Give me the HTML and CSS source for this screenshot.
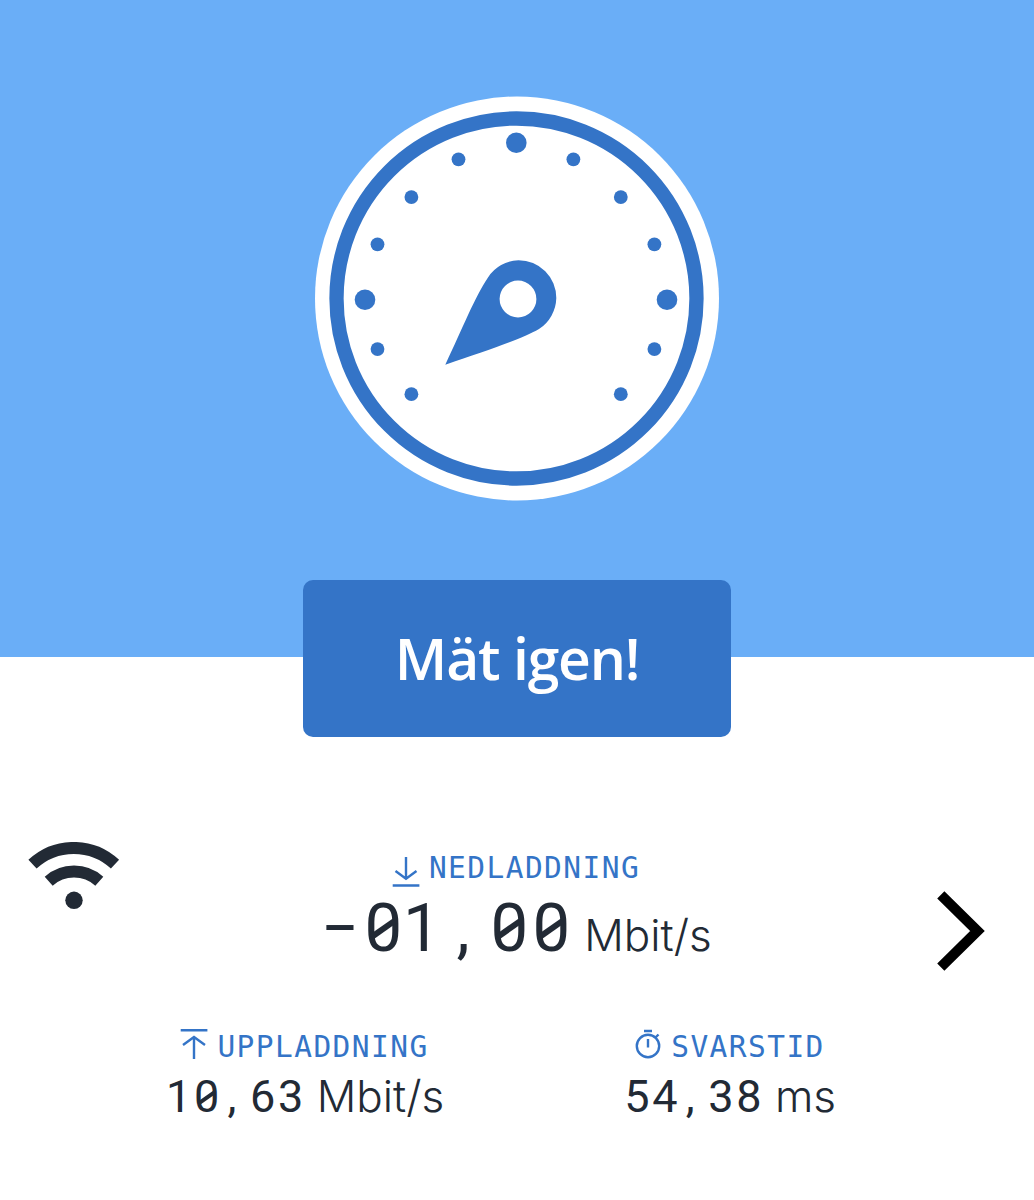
FILE: index.html
```html
<!DOCTYPE html>
<html lang="sv">
<head>
    <meta charset="utf-8">
    <title>Mät igen!</title>
    <link rel="stylesheet" href="styles.css">
</head>
<body>
    <!-- Mätare -->
    <div class="hero">
        <svg class="gauge" viewBox="0 0 404 404">
            <circle class="face" cx="202" cy="202" r="202"/>
            <circle class="ring" cx="201.5" cy="202" r="180"/>
            <circle cx="201.3" cy="46.2" r="10.3"/>
            <circle cx="50" cy="203.2" r="10.3"/>
            <circle cx="352" cy="203.2" r="10.3"/>
            <circle cx="143.5" cy="62.8" r="6.9"/>
            <circle cx="258.4" cy="62.8" r="6.9"/>
            <circle cx="96.4" cy="100.6" r="6.9"/>
            <circle cx="305.8" cy="100.6" r="6.9"/>
            <circle cx="62.5" cy="147.8" r="6.9"/>
            <circle cx="339.4" cy="147.8" r="6.9"/>
            <circle cx="62.5" cy="252.6" r="6.9"/>
            <circle cx="339.4" cy="252.6" r="6.9"/>
            <circle cx="96.4" cy="297.7" r="6.9"/>
            <circle cx="305.8" cy="297.7" r="6.9"/>
            <path d="M130.3 268.2C148 231 160 200 173 181A38 38 0 0 1 203.5 163.7A37.7 37.7 0 0 1 241.3 201.5A38 38 0 0 1 224 232.5C206 243 172 254 130.3 268.2z"/>
            <circle class="face" cx="203" cy="202.5" r="18.4"/>
        </svg>
        <button class="start">Mät igen!</button>
    </div>

    <!-- Resultat -->
    <div class="results">
        <div class="top-row">
            <svg class="wifi" width="92" height="68" viewBox="0 0 92 68">
                <path d="M4.5 22.2A60.5 60.5 0 0 1 87 22.2M20.7 39.2A38.1 38.1 0 0 1 71.3 39.2"/>
                <circle cx="46" cy="58.3" r="8.7"/>
            </svg>
            <div class="result main">
                <div class="label">
                    <svg width="28" height="32" viewBox="0 0 28 32"><path d="M14 1V23M3.5 15L14 22.8L24.5 15M.7 29.5H27.4"/></svg>
                    <span>NEDLADDNING</span>
                </div>
                <div class="value"><b class="minus">-</b><b class="zero">0</b><b class="one">1</b><b class="comma">,</b><b class="zero">0</b><b class="zero">0</b><span class="unit">Mbit/s</span></div>
            </div>
            <svg class="next" width="48" height="80" viewBox="0 0 48 80"><path d="M3.8 3.8L40.5 40L3.8 76.2"/></svg>
        </div>

        <div class="bottom-row">
            <div class="result">
                <div class="label">
                    <svg width="28" height="32" viewBox="0 0 28 32"><path d="M.7 2.3H27.4M14 31V9M3 17L14 9L25 17"/></svg>
                    <span>UPPLADDNING</span>
                </div>
                <div class="value"><b>1</b><b class="zero">0</b><b class="comma">,</b><b>6</b><b>3</b><span class="unit">Mbit/s</span></div>
            </div>
            <div class="result">
                <div class="label">
                    <svg width="28" height="32" viewBox="0 0 28 32"><circle cx="14" cy="18" r="11.2"/><path d="M10 3H18M14 11V19.5M21.5 9.5L24.5 6.5"/></svg>
                    <span>SVARSTID</span>
                </div>
                <div class="value"><b>5</b><b>4</b><b class="comma">,</b><b>3</b><b>8</b><span class="unit">ms</span></div>
            </div>
        </div>
    </div>
</body>
</html>
```

FILE: styles.css
```css
* { box-sizing: border-box; }
body { margin: 0; background: #fff; color: #222a35; font-family: Inter, sans-serif; }

.hero { height: 657px; padding-top: 96px; background: #6aaef7; display: flex; flex-direction: column; align-items: center; }
.gauge { width: 404px; height: 405px; flex: none; fill: #3474c7; }
.gauge .face { fill: #fff; }
.gauge .ring { fill: none; stroke: #3474c7; stroke-width: 14.3; }
.start { flex: none; width: 428px; height: 157px; margin-top: 79px; padding: 0 0 2px; border: 0; border-radius: 10px; background: #3474c7; color: #fff; font: 600 57px "Open Sans", sans-serif; letter-spacing: -1.2px; }

.results { padding-top: 185px; }
.top-row { display: grid; grid-template-columns: 1fr auto 1fr; padding: 0 49px 0 28px; height: 180px; }
.wifi { fill: #222a35; }
.wifi path { fill: none; stroke: #222a35; stroke-width: 12; }
.next { justify-self: end; margin-top: 49px; fill: none; stroke: #000; stroke-width: 10.2; }
.bottom-row { display: grid; grid-template-columns: 1fr 1fr; padding: 5px 92px 0; }

.result { display: flex; flex-direction: column; align-items: center; }
.main { padding-top: 13px; margin-right: -21px; margin-left: -2px; }
.label { display: flex; align-items: center; gap: 9px; height: 34px; color: #3474c7; font: 29.5px/34px "DejaVu Sans Mono", monospace; letter-spacing: 1.44px; }
.label span { padding-top: 6px; }
.main .label span { padding: 0 0 8px; }
.label svg { fill: none; stroke: #3474c7; stroke-width: 2.4; }

/* digits sit in equal cells */
.value { display: flex; align-items: baseline; margin-top: 5px; font-size: 45px; line-height: 60px; }
.value b { position: relative; width: 28px; text-align: center; font-family: Roboto, sans-serif; font-weight: 400; }
.zero::after { content: ""; position: absolute; left: 17%; right: 17%; top: 47.5%; height: .085em; background: #222a35; transform: rotate(-35deg); }
.value .comma { transform: translateX(-.06em); }
.main .one { transform: translateX(-.05em); }
.value .minus { transform: translate(-1px, -3px) scaleX(1.7); }
.unit { margin-left: 12px; font-size: 44px; font-weight: 300; }
.main .value { margin-top: -1px; font-size: 67px; line-height: 80px; }
.main b { width: 42px; }
```
